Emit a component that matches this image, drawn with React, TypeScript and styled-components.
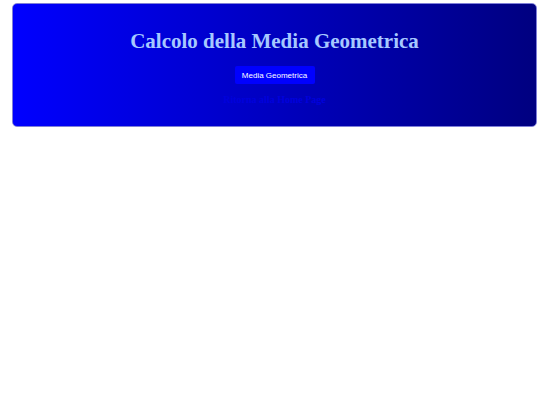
import React from "react";
import styled, { createGlobalStyle } from "styled-components";

const Global = createGlobalStyle`
  html, body { margin: 0; padding: 0; background: #ffffff; }
  body { font-family: "Liberation Serif", "Times New Roman", serif; }
`;

const Page = styled.div`
  padding: 3px 3px 0 12px;
`;

const Panel = styled.header`
  box-sizing: border-box;
  height: 124px;
  border-radius: 5px;
  border: 1px solid #7f7fd8;
  background: linear-gradient(to right, #0000ff, #000080);
  display: flex;
  flex-direction: column;
  align-items: center;
  padding-top: 25px;
`;

const Title = styled.h1`
  margin: 0;
  font-family: "Liberation Serif", "Times New Roman", serif;
  font-weight: bold;
  font-size: 21px;
  line-height: 24px;
  color: #a6c8ff;
`;

const Button = styled.button`
  margin-top: 13px;
  width: 80px;
  height: 18px;
  border: none;
  border-radius: 2px;
  background: #0000ff;
  color: #ffffff;
  font-family: "Liberation Sans", Arial, sans-serif;
  font-size: 8px;
  padding: 0;
  cursor: pointer;
`;

const HomeLink = styled.a`
  display: block;
  margin-top: 10px;
  font-family: "Liberation Serif", "Times New Roman", serif;
  font-weight: bold;
  font-size: 10px;
  line-height: 12px;
  color: #0000dc;
  text-decoration: none;
`;

export default function App() {
  return (
    <>
      <Global />
      <Page>
        <Panel>
          <Title>Calcolo della Media Geometrica</Title>
          <Button>Media Geometrica</Button>
          <HomeLink href="#">Ritorna alla Home Page</HomeLink>
        </Panel>
      </Page>
    </>
  );
}
